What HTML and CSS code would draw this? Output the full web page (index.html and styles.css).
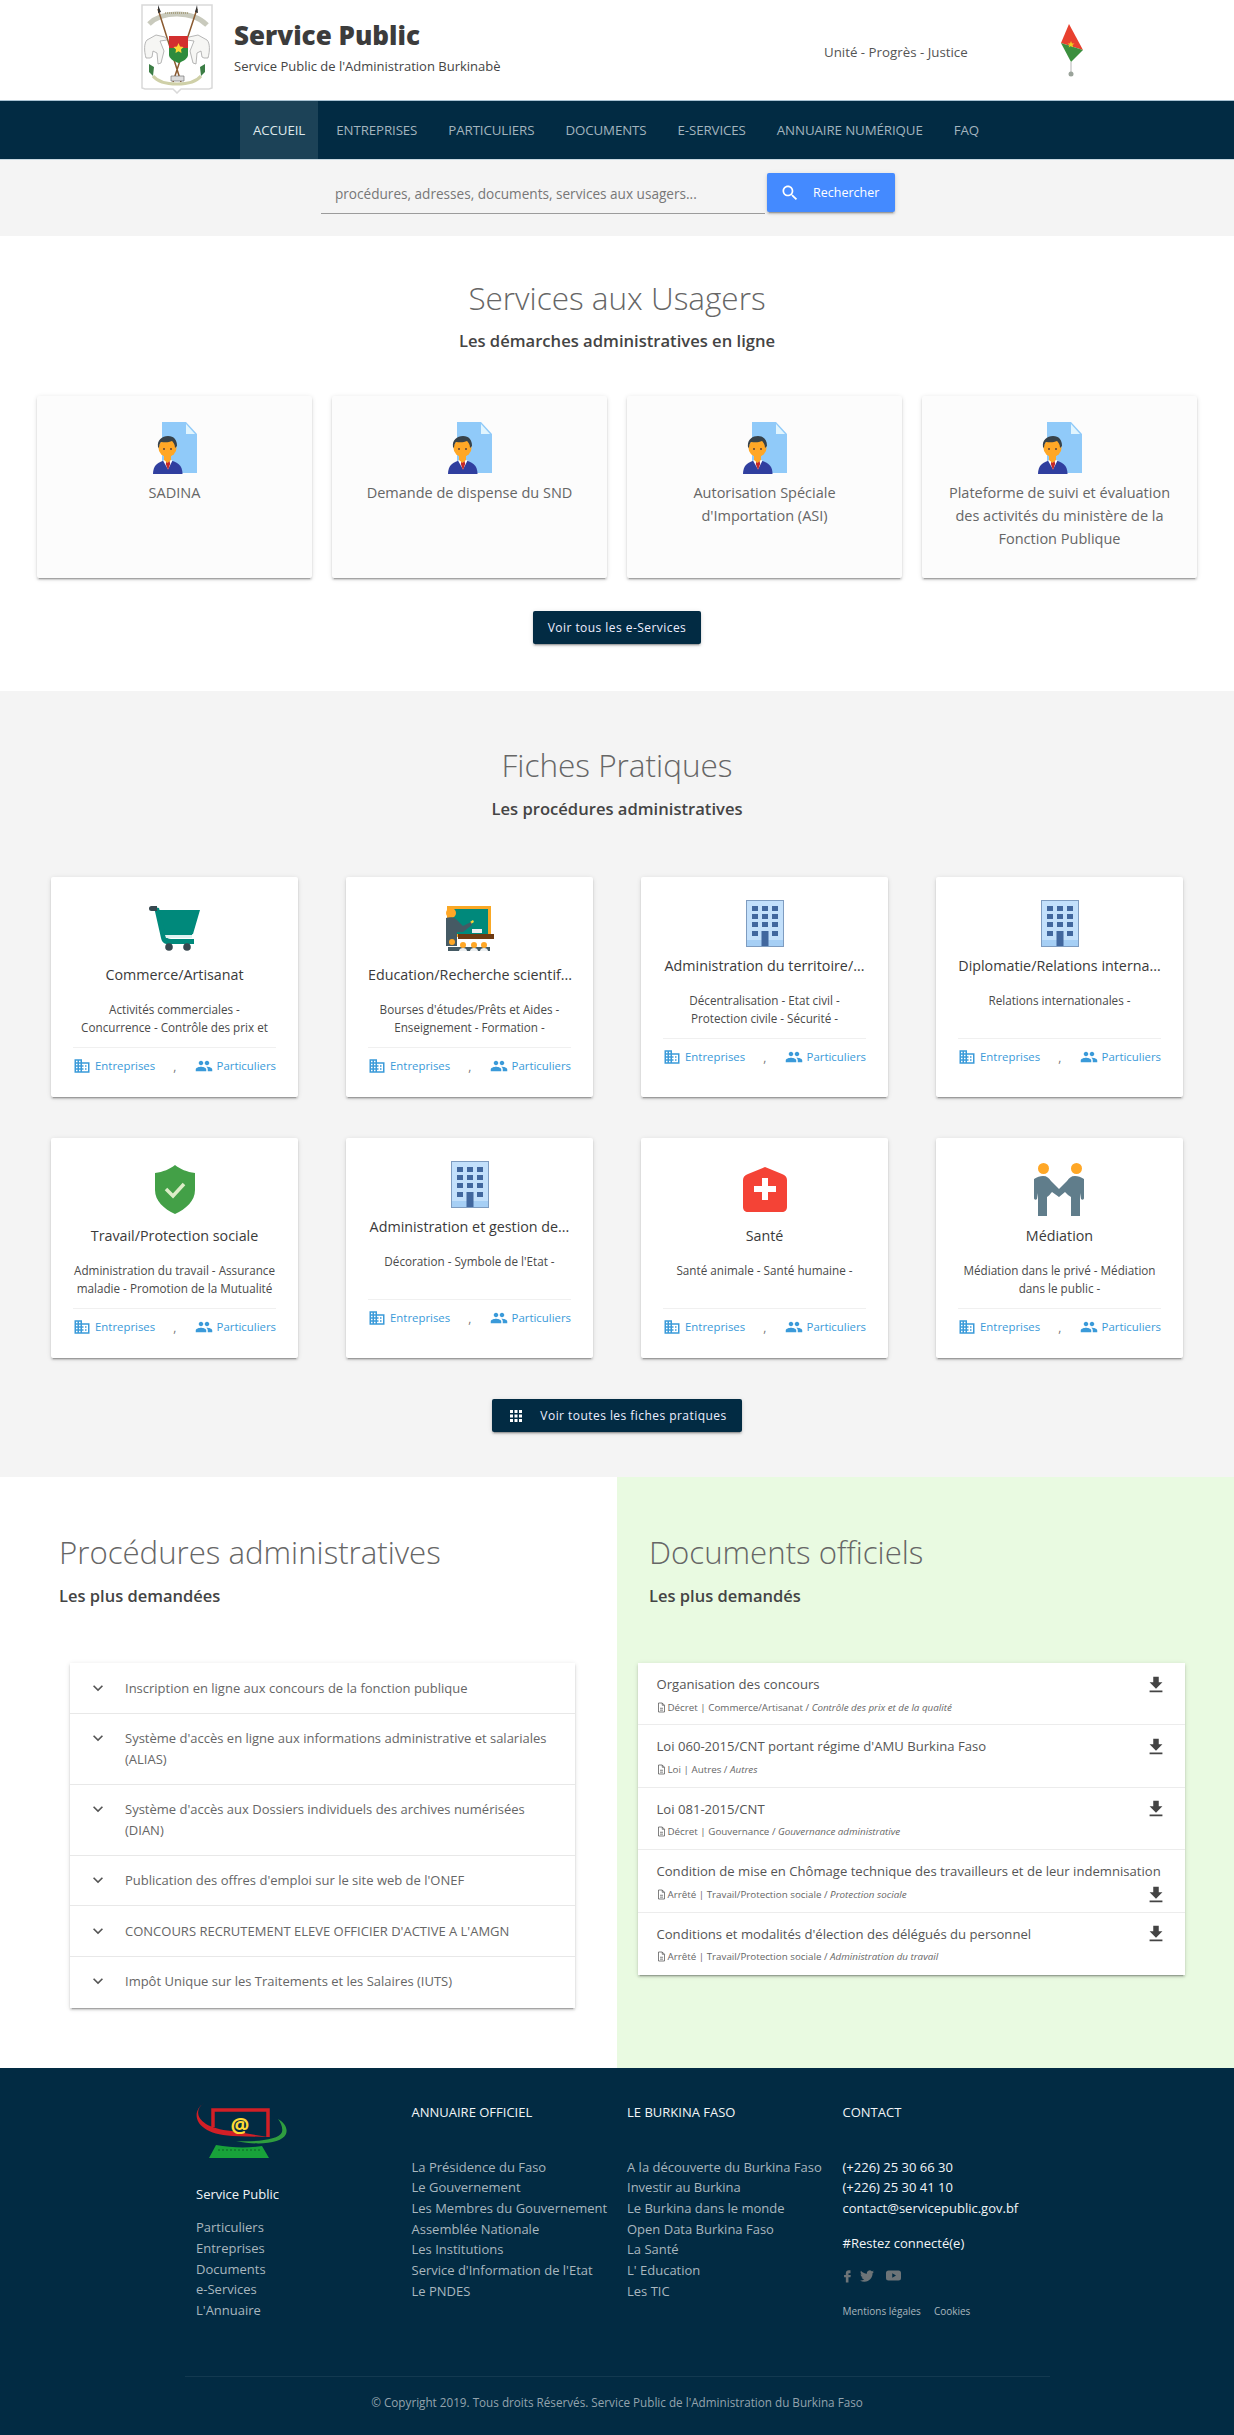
FILE: index.html
```html
<!DOCTYPE html>
<html lang="fr">
<head>
<meta charset="utf-8">
<title>Service Public</title>
<link rel="stylesheet" href="styles.css">
</head>
<body>
<svg class="sprite" xmlns="http://www.w3.org/2000/svg">
  <symbol id="i-domain" viewBox="0 0 24 24"><path d="M12 7V3H2v18h20V7H12zM6 19H4v-2h2v2zm0-4H4v-2h2v2zm0-4H4V9h2v2zm0-4H4V5h2v2zm4 12H8v-2h2v2zm0-4H8v-2h2v2zm0-4H8V9h2v2zm0-4H8V5h2v2zm10 12h-8v-2h2v-2h-2v-2h2v-2h-2V9h8v10zm-2-8h-2v2h2v-2zm0 4h-2v2h2v-2z"/></symbol>
  <symbol id="i-people" viewBox="0 0 24 24"><path d="M16 11c1.66 0 2.99-1.34 2.99-3S17.66 5 16 5c-1.66 0-3 1.34-3 3s1.34 3 3 3zm-8 0c1.66 0 2.99-1.34 2.99-3S9.66 5 8 5C6.34 5 5 6.34 5 8s1.34 3 3 3zm0 2c-2.33 0-7 1.17-7 3.5V19h14v-2.5c0-2.33-4.67-3.5-7-3.5zm8 0c-.29 0-.62.02-.97.05 1.16.84 1.97 1.97 1.97 3.45V19h6v-2.5c0-2.33-4.67-3.5-7-3.5z"/></symbol>
  <symbol id="i-chevron" viewBox="0 0 24 24"><path d="M16.59 8.59L12 13.17 7.41 8.59 6 10l6 6 6-6z"/></symbol>
  <symbol id="i-download" viewBox="0 0 24 24"><path d="M19 9h-4V3H9v6H5l7 7 7-7zM5 18v2h14v-2H5z"/></symbol>
  <symbol id="i-file" viewBox="0 0 12 14"><path fill="none" stroke="#555" stroke-width="1" d="M2 1h5l3 3v9H2zM7 1v3h3M4 8h4M4 10.500h4"/></symbol>
  <symbol id="i-user" viewBox="0 0 44 52">
    <path fill="#90caf9" d="M9 0h24l11 12v39H9z"/><path fill="#e1f5fe" d="M33 2l9 10h-9z"/>
    <path fill="#303f9f" d="M0 52c0-9 5-12 14.500-14.500 10 2.500 15 5.500 15 14.500z"/>
    <path fill="#fff" d="M10 38.500l4.500-2 5 2-4.500 9z"/><path fill="#c62828" d="M13.500 39h3l.7 3-2.200 6-2.200-6z"/>
    <path fill="#ffa726" d="M11 32h7v6l-3.500 3-3.500-3z"/><circle cx="14.500" cy="26" r="9" fill="#ffa726"/>
    <circle cx="11" cy="27" r="1" fill="#5d4037"/><circle cx="18" cy="27" r="1" fill="#5d4037"/>
    <path fill="#37424a" d="M5 25c-1-7 4-11 10-11 6 0 9 4 9 10l-2 2c0-4-2-6-3-7-4 2-9 1-11 1-1 1-2 3-2 6z"/>
  </symbol>
  <symbol id="i-cart" viewBox="0 0 51 45">
    <path fill="#00897b" d="M8 4h43l-7 24H15L9 7z"/>
    <path fill="#00897b" d="M5 1l5 1 7 27c1 3 2 4 5 4h23v5H19c-4 0-6-2-7-6z"/><path fill="#37474f" d="M0 2.500a2.500 2.500 0 0 1 2.500-2.500H8v5H2.500A2.500 2.500 0 0 1 0 2.500z"/>
    <path fill="#00897b" d="M15 26h29l-2 6H17z"/><path fill="#e0f2f1" d="M16 29h27v3H17z"/>
    <circle cx="20" cy="41" r="3.800" fill="#37474f"/><circle cx="38" cy="41" r="3.800" fill="#37474f"/>
  </symbol>
  <symbol id="i-teacher" viewBox="0 0 48 45">
    <path fill="#f9a825" d="M1 0h44v31H1z"/><path fill="#00897b" d="M5 3h37v25H5z"/>
    <path fill="#eceff1" d="M26 23h10v4H26z"/><path fill="#fdd835" d="M24 16l3-2 1 2-3 2z"/>
    <circle cx="5" cy="7" r="5" fill="#ffa726"/><path fill="#455a64" d="M0 12c3-1 8-1 10 1l7 7 8-4 1 3-9 7h-6v14H0z"/>
    <path fill="#6d3a12" d="M12 28h36v5H12z"/><path fill="#455a64" d="M2 41h42v4H2z"/>
    <g fill="#ffa726"><circle cx="6" cy="36" r="3"/><circle cx="17" cy="39" r="3"/><circle cx="28" cy="39" r="3"/><circle cx="38" cy="39" r="3"/></g>
    <g fill="#eceff1"><path d="M13 45c0-2 2-3 4-3s4 1 4 3zM24 45c0-2 2-3 4-3s4 1 4 3zM34 45c0-2 2-3 4-3s4 1 4 3z"/></g>
  </symbol>
  <symbol id="i-building" viewBox="0 0 38 47">
    <path fill="#7e9cc0" d="M0 0h38v47H0z"/><path fill="#c3e0fb" d="M1 1h36v45H1z"/><path fill="#a6cff5" d="M1 40h36v6H1z"/>
    <g fill="#41679e"><path d="M6 6h6v5H6zM16 6h6v5h-6zM26 6h6v5h-6zM6 14h6v5H6zM16 14h6v5h-6zM26 14h6v5h-6zM6 22h6v5H6zM16 22h6v5h-6zM26 22h6v5h-6zM6 31h6v5H6zM26 31h6v5h-6zM15.500 31h7v15h-7z"/></g>
  </symbol>
  <symbol id="i-shield" viewBox="0 0 40 49">
    <path fill="#43a047" d="M20 0c5 4 12 7 20 8v17c0 11-9 19-20 24C9 44 0 36 0 25V8c8-1 15-4 20-8z"/>
    <path fill="none" stroke="#dcedc8" stroke-width="3.500" d="M11 24l7 7 11-12"/>
  </symbol>
  <symbol id="i-health" viewBox="0 0 44 45">
    <path fill="#f44336" d="M22 0l17 7c3 1 5 3 5 6v27c0 3-2 5-5 5H5c-3 0-5-2-5-5V13c0-3 2-5 5-6z"/>
    <path fill="#fff" d="M19 14h6v8h8v6h-8v8h-6v-8h-8v-6h8z" transform="translate(0 -3)"/>
  </symbol>
  <symbol id="i-mediation" viewBox="0 0 52 53">
    <circle cx="9.500" cy="5.500" r="5.500" fill="#ffa726"/><circle cx="42.500" cy="5.500" r="5.500" fill="#ffa726"/>
    <path fill="#607d8b" d="M1 16c3-2 6-3 9-3 4 0 6 2 8 5l8 8 8-8c2-3 4-5 8-5 3 0 6 1 9 3v19c0 2-2 2-3 1l-1-6v23h-9V34c-2-1-4-3-6-5l-6 5-7-5c-2 2-3 4-5 5v19H5V30l-1 6c-1 1-3 1-3-1z" transform="translate(-1 0)"/>
  </symbol>
  <symbol id="i-coat" viewBox="0 0 72 90">
    <path fill="#fff" stroke="#d9d9d9" stroke-width="1.500" d="M1 1h70v83l-3 1H40l-4 4-4-4H4l-3-1z"/>
    <path fill="none" stroke="#c9cabd" stroke-width="5" d="M8 20c7-7 18-10 28-10 10 0 22 3 30 11"/>
    <path fill="none" stroke="#8a7a4a" stroke-width="1" stroke-dasharray="1 1" d="M24 9h23"/>
    <path stroke="#8a5a30" stroke-width="1.500" d="M17 5l23 73M56 5L32 78"/>
    <path fill="#333" d="M17 1l3 7-3 1zM56 1l1 8-3-1z"/>
    <path fill="#f6f6f4" stroke="#a5a5a5" stroke-width=".8" d="M5 54c-2-7-2-15 1-18l9-5 9 2 2 3-7 1 4 10-3 12-3 1-1-11-4-2-1 6-2 1zM67 54c2-7 2-15-1-18l-9-5-9 2-2 3 7 1-4 10 3 12 3 1 1-11 4-2 1 6 2 1z"/>
    <path fill="#d32f2f" d="M28 32h19v12H28z"/><path fill="#2e8b3d" d="M28 44h19v7c0 3-4 6-9.500 8-5.500-2-9.500-5-9.500-8z"/>
    <path fill="#fdd835" d="M37.500 39l1.500 3.500 3.500.5-2.500 2.500.5 3.500-3-1.700-3 1.700.5-3.500L32.500 43l3.500-.5z"/>
    <path fill="#3c7d45" d="M8 60l5 3-1 9-4-4zM64 60l-5 3 1 9 4-4z"/>
    <path fill="none" stroke="#cfd0a8" stroke-width="3" d="M12 72c4 5 12 8 24 8s20-3 24-8"/>
    <path fill="#ddd" stroke="#777" stroke-width=".7" d="M30 72h13v5H30z"/>
  </symbol>
  <symbol id="i-flag" viewBox="0 0 22 53">
    <path fill="#e8412f" d="M8 0l14 26L0 19z"/><path fill="#3b8f3e" d="M0 19l22 7-12 12z"/><path fill="#f0d020" d="M10 17l1 2.500h2.500l-2 1.500.8 2.500-2.300-1.500-2.300 1.500.8-2.500-2-1.500H9z"/>
    <path stroke="#b5b5b5" stroke-width="1" d="M10 38v11"/><circle cx="10" cy="50" r="2.500" fill="#9aa39a"/>
  </symbol>
  <symbol id="i-fb" viewBox="0 0 24 24"><path d="M15 8h3V3h-3c-3 0-5 2.200-5 5v3H7v4h3v9h4.500v-9H18l.5-4h-4V9c0-.6.400-1 .500-1z"/></symbol>
  <symbol id="i-tw" viewBox="0 0 24 24"><path d="M23.950 4.570a10 10 0 0 1-2.820.77 4.960 4.960 0 0 0 2.160-2.720c-.95.55-2 .96-3.120 1.190a4.920 4.920 0 0 0-8.380 4.480C7.690 8.090 4.070 6.130 1.640 3.160a4.820 4.820 0 0 0-.67 2.480c0 1.710.87 3.210 2.190 4.100a4.900 4.900 0 0 1-2.230-.62v.06a4.920 4.920 0 0 0 3.950 4.830 5 5 0 0 1-2.210.08 4.940 4.940 0 0 0 4.600 3.420A9.870 9.870 0 0 1 0 19.540a14 14 0 0 0 7.560 2.210c9.050 0 14-7.500 14-13.980 0-.21 0-.42-.02-.63a9.940 9.940 0 0 0 2.410-2.550z"/></symbol>
  <symbol id="i-yt" viewBox="0 0 24 24"><path fill-rule="evenodd" d="M4 4h16a4 4 0 0 1 4 4v8a4 4 0 0 1-4 4H4a4 4 0 0 1-4-4V8a4 4 0 0 1 4-4zm6 4.500v7l6-3.500z"/></symbol>
  <symbol id="i-search" viewBox="0 0 24 24"><path d="M15.500 14h-.79l-.28-.27C15.410 12.590 16 11.110 16 9.500 16 5.910 13.090 3 9.500 3S3 5.910 3 9.500 5.910 16 9.500 16c1.610 0 3.090-.59 4.230-1.570l.27.28v.79l5 4.990L20.490 19l-4.990-5zm-6 0C7.010 14 5 11.990 5 9.500S7.010 5 9.500 5 14 7.010 14 9.500 11.990 14 9.500 14z"/></symbol>
  <symbol id="i-apps" viewBox="0 0 24 24"><path d="M4 8h4V4H4v4zm6 12h4v-4h-4v4zm-6 0h4v-4H4v4zm0-6h4v-4H4v4zm6 0h4v-4h-4v4zm6-10v4h4V4h-4zm-6 4h4V4h-4v4zm6 6h4v-4h-4v4zm0 6h4v-4h-4v4z"/></symbol>
</svg>

<header class="topbar">
  <svg class="coat"><use href="#i-coat"/></svg>
  <div class="brand">
    <div class="brand-name">Service Public</div>
    <div class="brand-sub">Service Public de l'Administration Burkinabè</div>
  </div>
  <div class="motto">Unité - Progrès - Justice</div>
  <svg class="flag"><use href="#i-flag"/></svg>
</header>

<nav class="mainnav">
  <a class="navlink is-active">ACCUEIL</a>
  <a class="navlink">ENTREPRISES</a>
  <a class="navlink">PARTICULIERS</a>
  <a class="navlink">DOCUMENTS</a>
  <a class="navlink">E-SERVICES</a>
  <a class="navlink">ANNUAIRE NUMÉRIQUE</a>
  <a class="navlink">FAQ</a>
</nav>

<div class="searchband">
  <input class="searchinput" type="text" placeholder="procédures, adresses, documents, services aux usagers...">
  <button class="searchbtn"><svg class="searchicon"><use href="#i-search"/></svg>Rechercher</button>
</div>

<section class="services">
  <h2 class="sec-title">Services aux Usagers</h2>
  <p class="sec-sub">Les démarches administratives en ligne</p>
  <div class="service-grid">
    <article class="service-card"><svg class="usericon"><use href="#i-user"/></svg><p class="service-name">SADINA</p></article>
    <article class="service-card"><svg class="usericon"><use href="#i-user"/></svg><p class="service-name">Demande de dispense du SND</p></article>
    <article class="service-card"><svg class="usericon"><use href="#i-user"/></svg><p class="service-name">Autorisation Spéciale d'Importation (ASI)</p></article>
    <article class="service-card"><svg class="usericon"><use href="#i-user"/></svg><p class="service-name">Plateforme de suivi et évaluation des activités du ministère de la Fonction Publique</p></article>
  </div>
  <div class="btnrow"><a class="darkbtn">Voir tous les e-Services</a></div>
</section>

<section class="fiches">
  <h2 class="sec-title">Fiches Pratiques</h2>
  <p class="sec-sub">Les procédures administratives</p>
  <div class="fiche-grid">
    <article class="fiche">
      <div class="fiche-icon"><svg class="ic-cart"><use href="#i-cart"/></svg></div>
      <h3 class="fiche-title">Commerce/Artisanat</h3>
      <p class="fiche-desc">Activités commerciales - Concurrence - Contrôle des prix et</p>
      <div class="fiche-links"><a class="flink"><svg class="ficon"><use href="#i-domain"/></svg>Entreprises</a><span class="fsep">,</span><a class="flink"><svg class="ficon"><use href="#i-people"/></svg>Particuliers</a></div>
    </article>
    <article class="fiche">
      <div class="fiche-icon"><svg class="ic-teacher"><use href="#i-teacher"/></svg></div>
      <h3 class="fiche-title">Education/Recherche scientif...</h3>
      <p class="fiche-desc">Bourses d'études/Prêts et Aides - Enseignement - Formation -</p>
      <div class="fiche-links"><a class="flink"><svg class="ficon"><use href="#i-domain"/></svg>Entreprises</a><span class="fsep">,</span><a class="flink"><svg class="ficon"><use href="#i-people"/></svg>Particuliers</a></div>
    </article>
    <article class="fiche">
      <div class="fiche-icon is-short"><svg class="ic-building"><use href="#i-building"/></svg></div>
      <h3 class="fiche-title">Administration du territoire/...</h3>
      <p class="fiche-desc">Décentralisation - Etat civil - Protection civile - Sécurité -</p>
      <div class="fiche-links"><a class="flink"><svg class="ficon"><use href="#i-domain"/></svg>Entreprises</a><span class="fsep">,</span><a class="flink"><svg class="ficon"><use href="#i-people"/></svg>Particuliers</a></div>
    </article>
    <article class="fiche">
      <div class="fiche-icon is-short"><svg class="ic-building"><use href="#i-building"/></svg></div>
      <h3 class="fiche-title">Diplomatie/Relations interna...</h3>
      <p class="fiche-desc">Relations internationales -</p>
      <div class="fiche-links"><a class="flink"><svg class="ficon"><use href="#i-domain"/></svg>Entreprises</a><span class="fsep">,</span><a class="flink"><svg class="ficon"><use href="#i-people"/></svg>Particuliers</a></div>
    </article>
    <article class="fiche">
      <div class="fiche-icon"><svg class="ic-shield"><use href="#i-shield"/></svg></div>
      <h3 class="fiche-title">Travail/Protection sociale</h3>
      <p class="fiche-desc">Administration du travail - Assurance maladie - Promotion de la Mutualité</p>
      <div class="fiche-links"><a class="flink"><svg class="ficon"><use href="#i-domain"/></svg>Entreprises</a><span class="fsep">,</span><a class="flink"><svg class="ficon"><use href="#i-people"/></svg>Particuliers</a></div>
    </article>
    <article class="fiche">
      <div class="fiche-icon is-short"><svg class="ic-building"><use href="#i-building"/></svg></div>
      <h3 class="fiche-title">Administration et gestion de...</h3>
      <p class="fiche-desc">Décoration - Symbole de l'Etat -</p>
      <div class="fiche-links"><a class="flink"><svg class="ficon"><use href="#i-domain"/></svg>Entreprises</a><span class="fsep">,</span><a class="flink"><svg class="ficon"><use href="#i-people"/></svg>Particuliers</a></div>
    </article>
    <article class="fiche">
      <div class="fiche-icon"><svg class="ic-health"><use href="#i-health"/></svg></div>
      <h3 class="fiche-title">Santé</h3>
      <p class="fiche-desc">Santé animale - Santé humaine -</p>
      <div class="fiche-links"><a class="flink"><svg class="ficon"><use href="#i-domain"/></svg>Entreprises</a><span class="fsep">,</span><a class="flink"><svg class="ficon"><use href="#i-people"/></svg>Particuliers</a></div>
    </article>
    <article class="fiche">
      <div class="fiche-icon"><svg class="ic-mediation"><use href="#i-mediation"/></svg></div>
      <h3 class="fiche-title">Médiation</h3>
      <p class="fiche-desc">Médiation dans le privé - Médiation dans le public -</p>
      <div class="fiche-links"><a class="flink"><svg class="ficon"><use href="#i-domain"/></svg>Entreprises</a><span class="fsep">,</span><a class="flink"><svg class="ficon"><use href="#i-people"/></svg>Particuliers</a></div>
    </article>
  </div>
  <div class="btnrow"><a class="darkbtn has-icon"><svg class="appsicon"><use href="#i-apps"/></svg>Voir toutes les fiches pratiques</a></div>
</section>

<section class="twocol">
  <div class="col-proc">
    <h2 class="col-title">Procédures administratives</h2>
    <p class="col-sub">Les plus demandées</p>
    <div class="accordion">
      <div class="acc-row"><svg class="chev"><use href="#i-chevron"/></svg><span class="acc-text">Inscription en ligne aux concours de la fonction publique</span></div>
      <div class="acc-row"><svg class="chev"><use href="#i-chevron"/></svg><span class="acc-text">Système d'accès en ligne aux informations administrative et salariales<br>(ALIAS)</span></div>
      <div class="acc-row"><svg class="chev"><use href="#i-chevron"/></svg><span class="acc-text">Système d'accès aux Dossiers individuels des archives numérisées<br>(DIAN)</span></div>
      <div class="acc-row"><svg class="chev"><use href="#i-chevron"/></svg><span class="acc-text">Publication des offres d'emploi sur le site web de l'ONEF</span></div>
      <div class="acc-row"><svg class="chev"><use href="#i-chevron"/></svg><span class="acc-text">CONCOURS RECRUTEMENT ELEVE OFFICIER D'ACTIVE A L'AMGN</span></div>
      <div class="acc-row"><svg class="chev"><use href="#i-chevron"/></svg><span class="acc-text">Impôt Unique sur les Traitements et les Salaires (IUTS)</span></div>
    </div>
  </div>
  <div class="col-docs">
    <h2 class="col-title">Documents officiels</h2>
    <p class="col-sub">Les plus demandés</p>
    <div class="doclist">
      <div class="doc-row"><span class="doc-title">Organisation des concours</span><svg class="dl"><use href="#i-download"/></svg><p class="doc-meta"><svg class="fileicon"><use href="#i-file"/></svg>Décret | Commerce/Artisanat / <em>Contrôle des prix et de la qualité</em></p></div>
      <div class="doc-row"><span class="doc-title">Loi 060-2015/CNT portant régime d'AMU Burkina Faso</span><svg class="dl"><use href="#i-download"/></svg><p class="doc-meta"><svg class="fileicon"><use href="#i-file"/></svg>Loi | Autres / <em>Autres</em></p></div>
      <div class="doc-row"><span class="doc-title">Loi 081-2015/CNT</span><svg class="dl"><use href="#i-download"/></svg><p class="doc-meta"><svg class="fileicon"><use href="#i-file"/></svg>Décret | Gouvernance / <em>Gouvernance administrative</em></p></div>
      <div class="doc-row"><span class="doc-title">Condition de mise en Chômage technique des travailleurs et de leur indemnisation</span><svg class="dl"><use href="#i-download"/></svg><p class="doc-meta"><svg class="fileicon"><use href="#i-file"/></svg>Arrêté | Travail/Protection sociale / <em>Protection sociale</em></p></div>
      <div class="doc-row"><span class="doc-title">Conditions et modalités d'élection des délégués du personnel</span><svg class="dl"><use href="#i-download"/></svg><p class="doc-meta"><svg class="fileicon"><use href="#i-file"/></svg>Arrêté | Travail/Protection sociale / <em>Administration du travail</em></p></div>
    </div>
  </div>
</section>

<footer class="footer">
  <div class="foot-grid">
    <div class="foot-col">
      <svg class="foot-logo" viewBox="0 0 91 55">
        <path fill="#d21f26" d="M8 0C-4 8 1 25 36 28l36 6-36-1C-2 31-6 9 8 0z"/>
        <path fill="none" stroke="#d21f26" stroke-width="3.500" d="M17 24V7h55v27"/>
        <text class="foot-at" x="44" y="30">@</text>
        <path fill="#2f9e3f" d="M82 16c7 4 10 10 8 15-4 9-26 12-50 7 20 1 43-1 46-9 1-4-1-9-4-13z"/>
        <path fill="#18a23a" d="M13 55l7-13c16 3 33 3 46 1l7 12z"/>
        <path stroke="#0f7a2c" stroke-width="1.500" stroke-dasharray="2 2" d="M22 47h44"/>
      </svg>
      <div class="foot-brand">Service Public</div>
      <ul class="foot-links">
        <li>Particuliers</li><li>Entreprises</li><li>Documents</li><li>e-Services</li><li>L'Annuaire</li>
      </ul>
    </div>
    <div class="foot-col">
      <h4 class="foot-head">ANNUAIRE OFFICIEL</h4>
      <ul class="foot-links is-spaced">
        <li>La Présidence du Faso</li><li>Le Gouvernement</li><li>Les Membres du Gouvernement</li><li>Assemblée Nationale</li><li>Les Institutions</li><li>Service d'Information de l'Etat</li><li>Le PNDES</li>
      </ul>
    </div>
    <div class="foot-col">
      <h4 class="foot-head">LE BURKINA FASO</h4>
      <ul class="foot-links is-spaced">
        <li>A la découverte du Burkina Faso</li><li>Investir au Burkina</li><li>Le Burkina dans le monde</li><li>Open Data Burkina Faso</li><li>La Santé</li><li>L' Education</li><li>Les TIC</li>
      </ul>
    </div>
    <div class="foot-col">
      <h4 class="foot-head">CONTACT</h4>
      <ul class="foot-links is-spaced is-white">
        <li>(+226) 25 30 66 30</li><li>(+226) 25 30 41 10</li><li>contact@servicepublic.gov.bf</li>
      </ul>
      <div class="foot-tag">#Restez connecté(e)</div>
      <div class="socials"><svg class="soc-f"><use href="#i-fb"/></svg><svg class="soc-t"><use href="#i-tw"/></svg><svg class="soc-y"><use href="#i-yt"/></svg></div>
      <div class="legal"><span>Mentions légales</span><span>Cookies</span></div>
    </div>
  </div>
  <div class="foot-rule"></div>
  <div class="copyright">© Copyright 2019. Tous droits Réservés. Service Public de l'Administration du Burkina Faso</div>
</footer>
</body>
</html>
```
FILE: styles.css
```css
* { box-sizing: border-box; }
html, body { margin: 0; padding: 0; }
body { font-family: "Open Sans", "Noto Sans", sans-serif; color: #444; background: #fff; width: 1234px; }
.sprite { display: none; }
p, h2, h3, h4, ul { margin: 0; padding: 0; }
ul { list-style: none; }

/* header */
.topbar { height: 100px; display: flex; align-items: flex-start; padding-left: 141px; background: #fff; }
.coat { width: 72px; height: 90px; margin-top: 4px; flex: none; }
.brand { margin-left: 21px; margin-top: 18px; width: 590px; }
.brand-name { font-weight: 800; font-size: 26px; line-height: 35px; color: #3c3c3c; }
.brand-sub { font-size: 13px; line-height: 18px; color: #444; margin-top: 4px; }
.motto { margin-top: 42px; font-size: 13.300px; line-height: 20px; color: #555; width: 237px; }
.flag { width: 22px; height: 53px; margin-top: 24px; }

/* nav */
.mainnav { height: 60px; background: #022b43; border-top: 1px solid #a9c3d3; border-bottom: 1px solid #c9d9e2; display: flex; gap: 5px; padding-left: 240px; }
.navlink { padding: 0 13px; line-height: 58px; font-size: 13.300px; color: #a3b4be; letter-spacing: -.1px; }
.navlink.is-active { background: #1c4257; color: #dfe8ec; }

/* search */
.searchband { height: 76px; background: #f4f4f4; padding: 13px 0 0 321px; display: flex; align-items: flex-start; gap: 2px; }
.searchinput { width: 444px; height: 41px; border: 0; border-bottom: 1px solid #9b9b9b; background: transparent; padding: 0 14px; font: 13.600px "Open Sans", sans-serif; color: #555; outline: 0; }
.searchinput::placeholder { color: #777; opacity: 1; }
.searchbtn { width: 128px; height: 39px; border: 0; border-radius: 2px; background: #448aff; color: #fff; font: 12.500px "Open Sans", sans-serif; display: flex; align-items: center; padding: 0 0 0 13px; box-shadow: 0 2px 2px 0 rgba(0,0,0,.14), 0 3px 1px -2px rgba(0,0,0,.2), 0 1px 5px 0 rgba(0,0,0,.12); }
.searchicon { width: 20px; height: 20px; fill: #fff; margin-right: 13px; }

/* section headings */
.sec-title { font-weight: 300; font-size: 31.500px; line-height: 44px; color: #666; text-align: center; }
.sec-sub { font-weight: 600; font-size: 16.600px; line-height: 24px; color: #444; text-align: center; }

/* services */
.services { height: 455px; padding-top: 40px; background: #fff; }
.services .sec-sub { margin-top: 9px; }
.service-grid { display: grid; grid-template-columns: repeat(4, 275px); gap: 20px; padding-left: 37px; margin-top: 43px; }
.service-card { height: 182px; background: #fcfcfc; border-radius: 2px; padding: 26px 22px 0; text-align: center; box-shadow: 0 2px 2px 0 rgba(0,0,0,.14), 0 3px 1px -2px rgba(0,0,0,.2), 0 1px 5px 0 rgba(0,0,0,.12); }
.usericon { width: 44px; height: 52px; display: block; margin: 0 auto; }
.service-name { margin-top: 7px; font-size: 14.500px; line-height: 23px; color: #666; }
.btnrow { display: flex; justify-content: center; }
.services .btnrow { margin-top: 33px; }
.darkbtn { height: 33px; display: flex; align-items: center; padding: 0 15px; background: #022b43; border-radius: 2px; color: #eef; font-size: 12px; letter-spacing: .45px; box-shadow: 0 2px 2px 0 rgba(0,0,0,.14), 0 3px 1px -2px rgba(0,0,0,.2), 0 1px 5px 0 rgba(0,0,0,.12); }
.darkbtn.has-icon { padding: 0 15px; }
.appsicon { width: 18px; height: 18px; fill: #fff; margin-right: 15px; }

/* fiches */
.fiches { height: 786px; padding-top: 52px; background: #f4f4f4; }
.fiches .sec-sub { margin-top: 10px; }
.fiche-grid { display: grid; grid-template-columns: repeat(4, 247px); gap: 41px 48px; padding-left: 51px; margin-top: 56px; }
.fiche { height: 220px; background: #fff; border-radius: 2px; padding: 16px 22px 0; box-shadow: 0 2px 2px 0 rgba(0,0,0,.14), 0 3px 1px -2px rgba(0,0,0,.2), 0 1px 5px 0 rgba(0,0,0,.12); }
.fiche-icon { height: 70px; display: flex; align-items: center; justify-content: center; }
.fiche-icon.is-short { height: 61px; }
.ic-cart { width: 51px; height: 45px; }
.ic-teacher { width: 48px; height: 45px; }
.ic-building { width: 38px; height: 47px; }
.ic-shield { width: 40px; height: 49px; }
.ic-health { width: 44px; height: 45px; }
.ic-mediation { width: 52px; height: 53px; }
.fiche-title { font-weight: 400; font-size: 14.300px; line-height: 24px; color: #3a3a3a; text-align: center; white-space: nowrap; }
.fiche-desc { margin-top: 13px; height: 36px; overflow: hidden; font-size: 11.700px; line-height: 18px; color: #4a4a4a; text-align: center; }
.fiche-links { margin-top: 11px; padding-top: 5px; border-top: 1px solid #f0f0f0; display: flex; justify-content: space-between; align-items: center; height: 32px; }
.flink { display: flex; align-items: center; font-size: 11.400px; line-height: 24px; color: #3a9ad9; }
.ficon { width: 18px; height: 18px; fill: #3a9ad9; margin-right: 4px; }
.fsep { font-size: 12px; color: #777; }
.fiches .btnrow { margin-top: 41px; }

/* two columns */
.twocol { height: 591px; display: grid; grid-template-columns: 617px 617px; }
.col-proc { background: #fff; padding: 53px 0 0 59px; }
.col-docs { background: #e9fae1; padding: 53px 0 0 32px; }
.col-title { font-weight: 300; font-size: 31.200px; line-height: 44px; color: #666; }
.col-sub { margin-top: 10px; font-weight: 600; font-size: 16.500px; line-height: 24px; color: #444; }
.accordion { margin: 55px 0 0 11px; width: 505px; padding-bottom: 2px; background: #fff; box-shadow: 0 2px 2px 0 rgba(0,0,0,.14), 0 3px 1px -2px rgba(0,0,0,.2), 0 1px 5px 0 rgba(0,0,0,.12); }
.acc-row { display: flex; align-items: flex-start; padding: 14.500px 0 14.500px 18px; border-bottom: 1.500px solid #e8e8e8; }
.acc-row:last-child { border-bottom: 0; }
.chev { width: 20px; height: 20px; fill: #555; flex: none; margin-right: 17px; }
.acc-text { font-size: 13px; line-height: 20.500px; color: #666; }
.doclist { margin: 55px 0 0 -11px; width: 547px; background: #fff; box-shadow: 0 2px 2px 0 rgba(0,0,0,.14), 0 3px 1px -2px rgba(0,0,0,.2), 0 1px 5px 0 rgba(0,0,0,.12); }
.doc-row { padding: 9px 18.500px 10px; border-bottom: 1px solid #ececec; height: 62.400px; }
.doc-row:last-child { border-bottom: 0; }
.doc-title { font-size: 13.100px; line-height: 21px; color: #555; }
.dl { float: right; width: 22px; height: 22px; fill: #444; margin-top: 1.500px; }
.doc-meta { margin-top: 4.500px; font-size: 9.800px; line-height: 16px; color: #666; display: block; }
.fileicon { width: 9px; height: 11px; vertical-align: -2px; margin-right: 2px; }

/* footer */
.footer { height: 367px; background: #022b43; padding-top: 34px; }
.foot-grid { display: grid; grid-template-columns: repeat(4, 215.500px); padding-left: 196px; height: 219px; }
.foot-logo { width: 91px; height: 55px; display: block; margin-top: 1px; }
.foot-at { font: 700 21px "Open Sans", sans-serif; fill: #fdd835; text-anchor: middle; }
.foot-brand { margin-top: 25.500px; font-size: 13px; line-height: 20.700px; color: #f2f5f7; }
.foot-links { margin-top: 13px; font-size: 13px; line-height: 20.700px; color: #a9b7bf; }
.foot-links.is-spaced { margin-top: 34.500px; }
.foot-links.is-white { color: #f2f5f7; }
.foot-head { font-weight: 400; font-size: 13px; line-height: 20px; color: #f2f5f7; }
.foot-tag { margin-top: 14px; font-size: 13px; line-height: 20.700px; color: #f2f5f7; }
.socials { margin-top: 15px; display: flex; align-items: center; height: 15px; }
.socials svg { fill: #6d7478; }
.soc-f { width: 14px; height: 15px; margin-left: -3px; margin-right: 6px; }
.soc-t { width: 14px; height: 14px; margin-right: 12px; }
.soc-y { width: 15px; height: 15px; }
.legal { margin-top: 21px; font-size: 10px; line-height: 14px; color: #a9b7bf; display: flex; gap: 13px; }
.foot-rule { margin: 55px 0 0 185px; width: 865px; height: 1px; background: rgba(255,255,255,.07); }
.copyright { margin-top: 15px; font-size: 11.700px; line-height: 20px; color: #93a3ad; text-align: center; }
```
